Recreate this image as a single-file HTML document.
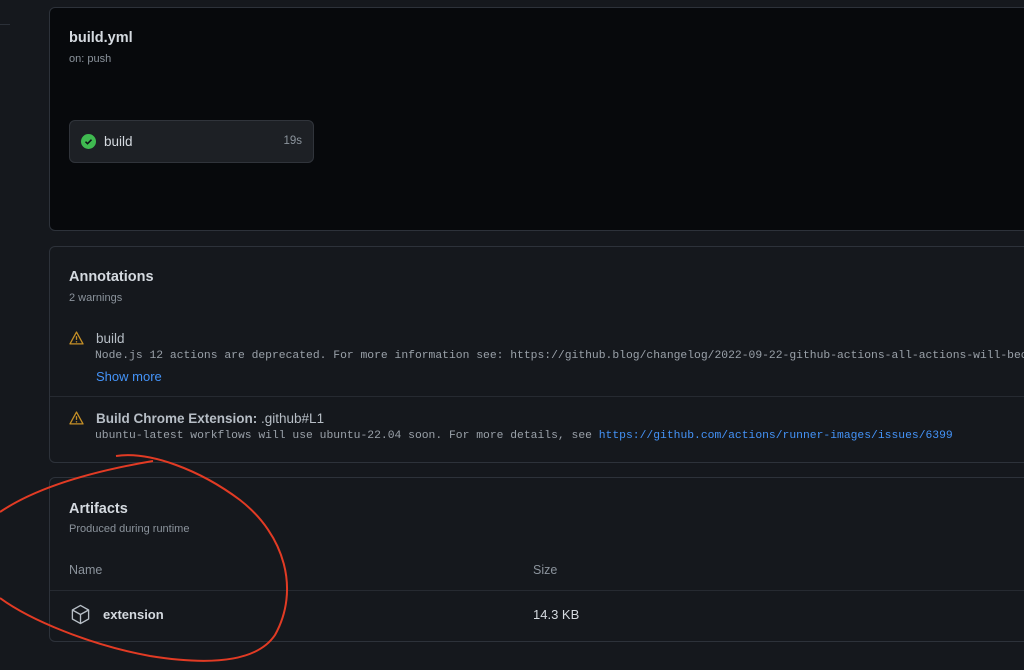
<!DOCTYPE html>
<html><head><style>
*{box-sizing:border-box;margin:0;padding:0}
body{width:1024px;height:670px;background:#15181d;font-family:"Liberation Sans",sans-serif;overflow:hidden;position:relative;color:#c9d1d9}
.card{position:absolute;left:49px;width:1000px;border:1px solid #2d323a;border-radius:6px}
.mono{font-family:"Liberation Mono",monospace;font-size:11.35px;color:#9aa1a9;white-space:nowrap}
.t{position:absolute;white-space:nowrap}
</style></head><body>
<div style="position:absolute;left:0;top:24px;width:10px;height:1px;background:#2b3038"></div>
<div class="card" style="top:7px;height:224px;background:#07090c">
  <div class="t" style="left:19px;top:22px;font-size:14.5px;font-weight:bold;color:#d5dae0">build.yml</div>
  <div class="t" style="left:19px;top:45px;font-size:11px;color:#8b939c">on: push</div>
  <div style="position:absolute;left:19px;top:112px;width:245px;height:43px;background:#1d2025;border:1px solid #30343b;border-radius:6px">
    <div style="position:absolute;left:11px;top:13px;width:15px;height:15px;border-radius:50%;background:#3fb950"></div>
    <svg style="position:absolute;left:11px;top:13px" width="15" height="15"><path d="M4.5 7.7l2 2 4-4" stroke="#0d1117" stroke-width="1.5" fill="none"/></svg>
    <div class="t" style="left:34px;top:13px;font-size:13.5px;color:#d5dae0">build</div>
    <div class="t" style="right:11px;top:14px;font-size:11.5px;color:#8b939c">19s</div>
  </div>
</div>
<div class="card" style="top:246px;height:217px;background:#15181d">
  <div class="t" style="left:19px;top:22px;font-size:14.5px;font-weight:bold;color:#d5dae0">Annotations</div>
  <div class="t" style="left:19px;top:45px;font-size:11px;color:#8b939c">2 warnings</div>
  <svg style="position:absolute;left:19px;top:84px" width="15" height="14" viewBox="0 0 16 15"><path d="M8 1.2L15 13.8H1z" stroke="#c69026" stroke-width="1.4" fill="none" stroke-linejoin="round"/><path d="M8 5.5v4" stroke="#c69026" stroke-width="1.4"/><circle cx="8" cy="11.6" r=".8" fill="#c69026"/></svg>
  <div class="t" style="left:46px;top:84px;font-size:13.5px;color:#b7bec6">build</div>
  <div class="t mono" style="left:45px;top:103px">Node.js 12 actions are deprecated. For more information see: https://github.blog/changelog/2022-09-22-github-actions-all-actions-will-bec</div>
  <div class="t" style="left:46px;top:122px;font-size:13px;color:#4493f8">Show more</div>
  <div style="position:absolute;left:0;right:0;top:149px;height:1px;background:#262a31"></div>
  <svg style="position:absolute;left:19px;top:164px" width="15" height="14" viewBox="0 0 16 15"><path d="M8 1.2L15 13.8H1z" stroke="#c69026" stroke-width="1.4" fill="none" stroke-linejoin="round"/><path d="M8 5.5v4" stroke="#c69026" stroke-width="1.4"/><circle cx="8" cy="11.6" r=".8" fill="#c69026"/></svg>
  <div class="t" style="left:46px;top:164px;font-size:13.5px;color:#b7bec6"><b>Build Chrome Extension:</b> .github#L1</div>
  <div class="t mono" style="left:45px;top:183px">ubuntu-latest workflows will use ubuntu-22.04 soon. For more details, see <span style="color:#4493f8">https://github.com/actions/runner-images/issues/6399</span></div>
</div>
<div class="card" style="top:477px;height:165px;background:#15181d">
  <div class="t" style="left:19px;top:23px;font-size:14.5px;font-weight:bold;color:#d5dae0">Artifacts</div>
  <div class="t" style="left:19px;top:45px;font-size:11px;color:#8b939c">Produced during runtime</div>
  <div class="t" style="left:19px;top:85px;font-size:12.5px;color:#8b939c">Name</div>
  <div class="t" style="left:483px;top:85px;font-size:12.5px;color:#8b939c">Size</div>
  <div style="position:absolute;left:0;right:0;top:112px;height:1px;background:#262a31"></div>
  <svg style="position:absolute;left:20px;top:126px" width="21" height="21" viewBox="0 0 22 22"><path d="M11 1.5L19.5 6.3v9.4L11 20.5 2.5 15.7V6.3z M2.5 6.3L11 11l8.5-4.7 M11 11v9.5" stroke="#b7bec6" stroke-width="1.4" fill="none" stroke-linejoin="round"/></svg>
  <div class="t" style="left:53px;top:129px;font-size:13px;font-weight:bold;color:#d5dae0">extension</div>
  <div class="t" style="left:483px;top:129px;font-size:13px;color:#d5dae0">14.3 KB</div>
</div>
<svg style="position:absolute;left:0;top:0" width="1024" height="670">
<path d="M116 456 C150 451 200 470 240 500 C285 535 300 590 275 635 C255 665 200 664 150 656 C90 645 30 620 0 598" stroke="#e23b24" stroke-width="2" fill="none"/>
<path d="M153 461 C100 470 40 485 0 512" stroke="#e23b24" stroke-width="2" fill="none"/>
</svg>
</body></html>
